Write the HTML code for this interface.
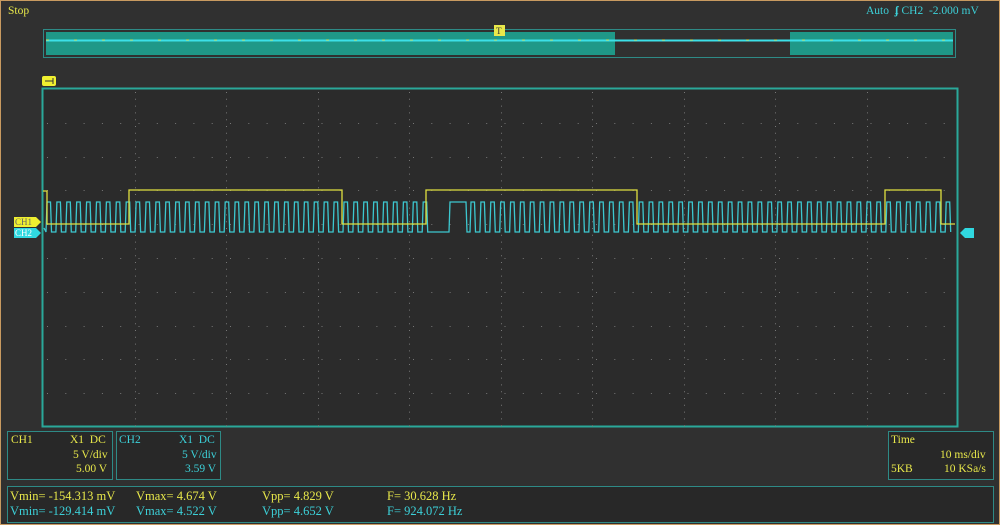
<!DOCTYPE html><html><head><style>
body{margin:0;width:1000px;height:525px;background:#303030;overflow:hidden;font-family:"Liberation Serif",serif;position:relative}
.f{position:absolute;left:0;top:0;width:998px;height:523px;border:1px solid #c89a60}
.t{position:absolute;font-size:11.5px;white-space:nowrap}
.y{color:#e8e84a}.c{color:#3cd0d8}
.box{position:absolute;border:1px solid #2e8a86;background:#282828}
</style></head><body>
<div class="f"></div>
<div class="t y" style="left:8px;top:5px">Stop</div>
<div class="t c" style="left:866px;top:5px">Auto &nbsp;<b>ʄ</b> CH2 &nbsp;-2.000 mV</div>
<svg width="1000" height="525" style="position:absolute;left:0;top:0">
<rect x="43.5" y="29.5" width="912" height="28" fill="none" stroke="#2e8a86"/>
<rect x="46" y="32" width="569" height="23" fill="#1f9888"/>
<rect x="790" y="32" width="163" height="23" fill="#1f9888"/>
<line x1="46" y1="40.5" x2="953" y2="40.5" stroke="#3ce0e8" stroke-width="2"/>
<line x1="46" y1="40" x2="953" y2="40" stroke="#c8e060" stroke-width="1" stroke-dasharray="3 25"/>
<rect x="494" y="25" width="11" height="11" fill="#e8e84a"/><text x="496" y="34" font-size="9" fill="#333">T</text>
<rect x="42" y="76" width="14" height="10" fill="#f0f030" rx="2"/><line x1="45" y1="81" x2="53" y2="81" stroke="#333"/><line x1="53" y1="78" x2="53" y2="84" stroke="#333"/>
<rect x="42.5" y="88.5" width="915" height="338" fill="#2b2b2b" stroke="#2aa89a" stroke-width="2"/>
<g id="grid" stroke="#777" stroke-width="1"></g>
<path id="c2" fill="none" stroke="#3cc8d0" stroke-width="1.3"/>
<path d="M43 191H47V224H129V190H342V224H426V190H637V224H885V190H941V224H955" fill="none" stroke="#e0e040" stroke-width="1.3"/>
<polygon points="14,217 36,217 41,222 36,227 14,227" fill="#f0f030"/><text x="15" y="225" font-size="9" fill="#666">CH1</text>
<polygon points="14,228 36,228 41,233 36,238 14,238" fill="#30d8e0"/><text x="15" y="236" font-size="9" fill="#fff">CH2</text>
<polygon points="960,233 965,228 974,228 974,238 965,238" fill="#30d8e0"/>
</svg>
<div class="box" style="left:7px;top:431px;width:104px;height:47px"></div>
<div class="t y" style="left:11px;top:434px">CH1</div>
<div class="t y" style="left:70px;top:434px">X1 &nbsp;DC</div>
<div class="t y" style="left:73px;top:449px">5 V/div</div>
<div class="t y" style="left:76px;top:463px">5.00 V</div>
<div class="box" style="left:116px;top:431px;width:103px;height:47px"></div>
<div class="t c" style="left:119px;top:434px">CH2</div>
<div class="t c" style="left:179px;top:434px">X1 &nbsp;DC</div>
<div class="t c" style="left:182px;top:449px">5 V/div</div>
<div class="t c" style="left:185px;top:463px">3.59 V</div>
<div class="box" style="left:888px;top:431px;width:104px;height:47px"></div>
<div class="t y" style="left:891px;top:434px">Time</div>
<div class="t y" style="left:940px;top:449px">10 ms/div</div>
<div class="t y" style="left:891px;top:463px">5KB</div>
<div class="t y" style="left:944px;top:463px">10 KSa/s</div>
<div class="box" style="left:7px;top:486px;width:985px;height:35px"></div>
<div class="t y" style="left:10px;top:489px;font-size:12.5px">Vmin= -154.313 mV</div><div class="t y" style="left:136px;top:489px;font-size:12.5px">Vmax= 4.674 V</div><div class="t y" style="left:262px;top:489px;font-size:12.5px">Vpp= 4.829 V</div><div class="t y" style="left:387px;top:489px;font-size:12.5px">F= 30.628 Hz</div>
<div class="t c" style="left:10px;top:504px;font-size:12.5px">Vmin= -129.414 mV</div><div class="t c" style="left:136px;top:504px;font-size:12.5px">Vmax= 4.522 V</div><div class="t c" style="left:262px;top:504px;font-size:12.5px">Vpp= 4.652 V</div><div class="t c" style="left:387px;top:504px;font-size:12.5px">F= 924.072 Hz</div>
<script>
var g=document.getElementById('grid'),s='';
for(var i=1;i<10;i++){var x=Math.round(43+i*91.5)+.5;for(var y=92;y<426;y+=6.8)s+='<line x1="'+x+'" y1="'+y+'" x2="'+x+'" y2="'+(y+1)+'"/>';}
for(var j=1;j<10;j++){var y=Math.round(89+j*33.8)+.5;for(var x=47;x<956;x+=18.3)s+='<line x1="'+x+'" y1="'+y+'" x2="'+(x+1)+'" y2="'+y+'"/>';}
g.innerHTML=s;
var d='M44 228',x=46;
while(x<955){if(x>428&&x<470){d+=' L'+x+' 232 L449 232 L450 202 L466 202 L467 232';x=470;continue;}
d+=' L'+x+' 232 L'+(x+1)+' 202 L'+(x+4.5)+' 202 L'+(x+5.5)+' 232';x+=9.9;}
document.getElementById('c2').setAttribute('d',d);
</script>
</body></html>
